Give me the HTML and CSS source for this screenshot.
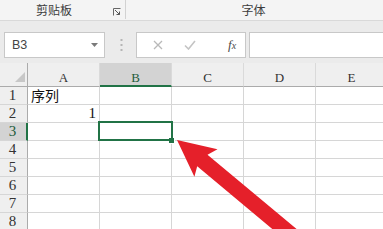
FILE: index.html
```html
<!DOCTYPE html>
<html lang="zh">
<head>
<meta charset="utf-8">
<link rel="stylesheet" href="styles.css">
</head>
<body>
<div class="app">
  <div class="ribbon">
    <div class="group clip">
      <span class="glabel">剪贴板</span>
      <svg class="launcher" width="8" height="8" viewBox="0 0 8 8"><path d="M0.5 7.5V0.5H7.5" fill="none" stroke="#666" stroke-width="1"/><path d="M2 2L6.5 6.5M6.5 3.5V6.5H3.5" fill="none" stroke="#555" stroke-width="1"/></svg>
    </div>
    <div class="group fontgrp"><span class="glabel">字体</span></div>
  </div>
  <div class="fbar">
    <div class="namebox"><span class="ref">B3</span><svg width="7" height="4" viewBox="0 0 7 4"><path d="M0 0H7L3.5 4Z" fill="#7a7a7a"/></svg></div>
    <div class="dots"><svg width="3" height="12" viewBox="0 0 3 12"><rect x="0.5" y="0" width="2" height="2" fill="#b5b5b5"/><rect x="0.5" y="5" width="2" height="2" fill="#b5b5b5"/><rect x="0.5" y="10" width="2" height="2" fill="#b5b5b5"/></svg></div>
    <div class="fbtns">
      <svg class="xbtn" width="10" height="10" viewBox="0 0 10 10"><path d="M1 1L9 9M9 1L1 9" stroke="#b9b9b9" stroke-width="1.3"/></svg>
      <svg class="okbtn" width="12" height="10" viewBox="0 0 12 10"><path d="M1 5.5L4.5 9L11 1" fill="none" stroke="#c4c4c4" stroke-width="1.6"/></svg>
      <span class="fx">f<span class="fxsub">x</span></span>
    </div>
    <div class="finput"></div>
  </div>
  <div class="sheet">
    <div class="cell corner"><svg width="28" height="23" viewBox="0 0 28 23"><path d="M15 19L25 9V19Z" fill="#c7c7c7"/></svg></div>
    <div class="cell colh">A</div>
    <div class="cell colh active">B</div>
    <div class="cell colh">C</div>
    <div class="cell colh">D</div>
    <div class="cell colh">E</div>

    <div class="cell rowh">1</div>
    <div class="cell text">序列</div><div class="cell"></div><div class="cell"></div><div class="cell"></div><div class="cell"></div>

    <div class="cell rowh">2</div>
    <div class="cell num">1</div><div class="cell"></div><div class="cell"></div><div class="cell"></div><div class="cell"></div>

    <div class="cell rowh active">3</div>
    <div class="cell"></div><div class="cell"></div><div class="cell"></div><div class="cell"></div><div class="cell"></div>

    <div class="cell rowh">4</div>
    <div class="cell"></div><div class="cell"></div><div class="cell"></div><div class="cell"></div><div class="cell"></div>

    <div class="cell rowh">5</div>
    <div class="cell"></div><div class="cell"></div><div class="cell"></div><div class="cell"></div><div class="cell"></div>

    <div class="cell rowh">6</div>
    <div class="cell"></div><div class="cell"></div><div class="cell"></div><div class="cell"></div><div class="cell"></div>

    <div class="cell rowh">7</div>
    <div class="cell"></div><div class="cell"></div><div class="cell"></div><div class="cell"></div><div class="cell"></div>

    <div class="cell rowh">8</div>
    <div class="cell"></div><div class="cell"></div><div class="cell"></div><div class="cell"></div><div class="cell"></div>

    <div class="selection"></div>
    <div class="handle"></div>
  </div>
  <svg class="arrow" width="383" height="229" viewBox="0 0 383 229">
    <polygon points="177,140 217.5,149.2 207.5,154.8 299,231 289,243 197.2,166.2 194.4,176.8" fill="#e5202a"/>
  </svg>
</div>
</body>
</html>
```
FILE: styles.css
```css
* { box-sizing: border-box; }
html, body { margin: 0; padding: 0; }
body {
  width: 383px;
  height: 229px;
  overflow: hidden;
  background: #ffffff;
  font-family: "Noto Sans CJK SC", "Liberation Sans", sans-serif;
}
.app {
  position: relative;
  width: 383px;
  height: 229px;
  overflow: hidden;
}
.ribbon {
  display: flex;
  height: 21px;
  background: #f4f4f4;
  border-bottom: 1px solid #d9d9d9;
}
.group {
  display: flex;
  align-items: center;
  height: 20px;
}
.clip {
  width: 126px;
  border-right: 1px solid #d2d2d2;
  height: 19px;
}
.glabel {
  font-size: 12px;
  line-height: 18px;
  color: #3c3c3c;
}
.clip .glabel { margin-left: 36px; }
.launcher { margin-left: auto; margin-right: 4px; margin-top: 5px; }
.fontgrp {
  flex: 1;
  justify-content: center;
  padding-right: 2px;
}
.fbar {
  display: flex;
  align-items: flex-start;
  height: 42px;
  padding: 11px 0 0 4px;
  background: #ebebeb;
}
.namebox {
  display: flex;
  align-items: center;
  justify-content: space-between;
  width: 101px;
  height: 26px;
  padding: 0 6px 0 7px;
  background: #ffffff;
  border: 1px solid #c8c8c8;
}
.ref {
  font-family: "Liberation Sans", sans-serif;
  font-size: 12.5px;
  color: #444;
}
.dots {
  display: flex;
  justify-content: center;
  align-items: center;
  width: 31px;
  height: 26px;
  padding-left: 1px;
}
.fbtns {
  display: flex;
  align-items: center;
  width: 110px;
  height: 26px;
  background: #ffffff;
  border: 1px solid #c8c8c8;
  padding-left: 16px;
}
.okbtn { margin-left: 21px; }
.fx {
  margin-left: 32px;
  font-family: "Liberation Serif", serif;
  font-style: italic;
  font-size: 13px;
  color: #4a4a4a;
}
.fxsub { font-size: 10px; }
.finput {
  flex: 1;
  height: 26px;
  margin-left: 3px;
  margin-right: -2px;
  background: #ffffff;
  border: 1px solid #c8c8c8;
}
.sheet {
  position: relative;
  display: grid;
  grid-template-columns: 28px repeat(5, 72px);
  grid-template-rows: 24px repeat(8, 18px);
  width: 388px;
}
.cell {
  border-right: 1px solid #d6d6d6;
  border-bottom: 1px solid #d6d6d6;
  font-family: "Liberation Serif", serif;
  color: #222;
}
.corner {
  background: #efefef;
  border-right: 1px solid #ababab;
  border-bottom: 1px solid #ababab;
}
.corner svg { display: block; }
.colh {
  display: flex;
  align-items: flex-end;
  justify-content: center;
  background: #efefef;
  border-bottom: 1px solid #ababab;
  border-right: 1px solid #dadada;
  font-size: 13px;
  line-height: 15px;
  padding-bottom: 1px;
  color: #333;
}
.colh.active {
  background: #d3d3d3;
  border-bottom: 2px solid #217346;
  color: #1f5c3b;
  padding-bottom: 0;
}
.rowh {
  display: flex;
  align-items: center;
  justify-content: center;
  background: #efefef;
  border-right: 1px solid #ababab;
  border-bottom: 1px solid #d6d6d6;
  font-size: 15px;
  line-height: 17px;
  color: #333;
  padding-right: 2px;
}
.rowh.active {
  background: #d3d3d3;
  border-right: 2px solid #217346;
  color: #1f5c3b;
  padding-right: 1px;
}
.text {
  font-family: "Noto Sans CJK SC", sans-serif;
  font-size: 14px;
  line-height: 17px;
  padding-left: 3px;
  color: #111;
}
.num {
  text-align: right;
  font-size: 15px;
  line-height: 17px;
  padding-right: 3px;
  color: #111;
}
.selection {
  position: absolute;
  left: 98px;
  top: 58px;
  width: 75px;
  height: 20px;
  border: 2px solid #217346;
}
.handle {
  position: absolute;
  left: 169px;
  top: 75px;
  width: 6px;
  height: 6px;
  background: #217346;
  border: 1px solid #ffffff;
  border-top: 0;
  border-left: 0;
}
.arrow {
  position: absolute;
  left: 0;
  top: 0;
  pointer-events: none;
}
```
